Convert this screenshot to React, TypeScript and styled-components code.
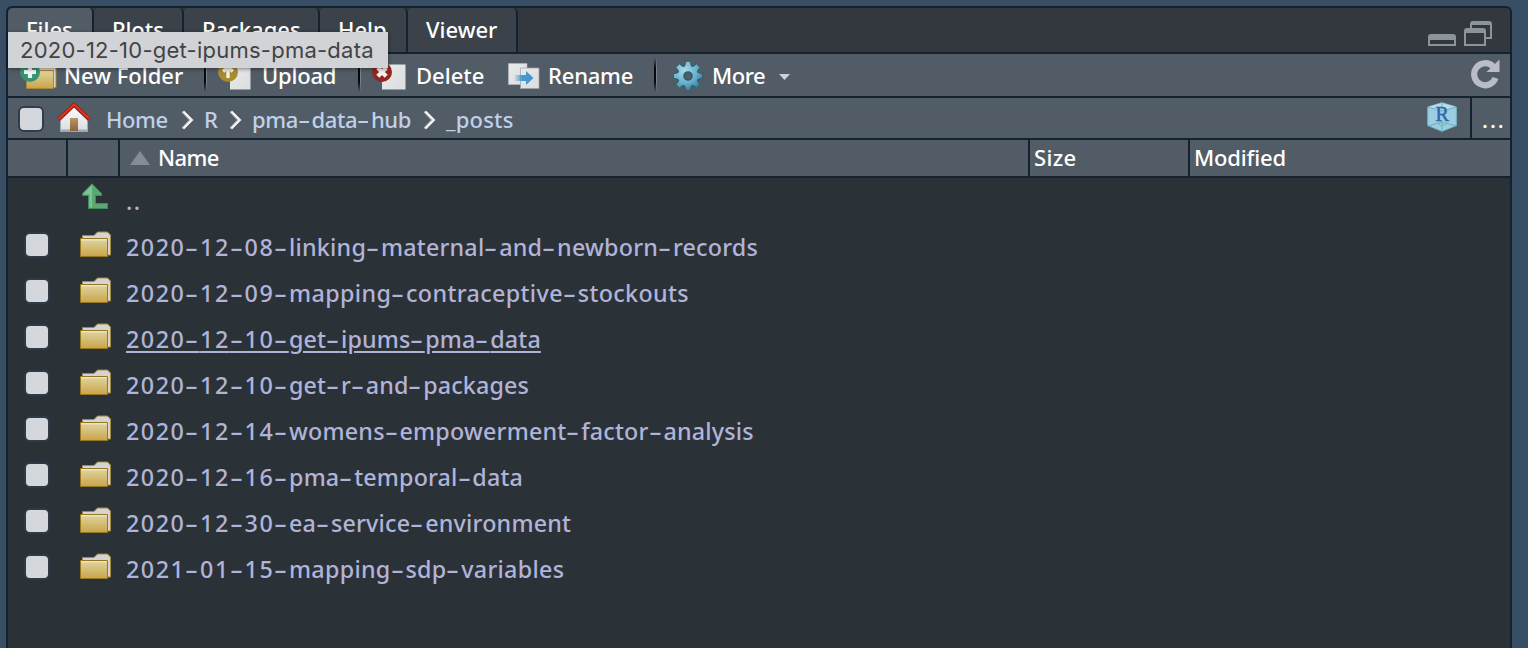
import React from "react";
import styled, { createGlobalStyle } from "styled-components";

const line = "#14212f";
const bar = "#525c66";

const GlobalStyle = createGlobalStyle`
  * { box-sizing: border-box; }
  body { margin: 0; background: #384e65; overflow: hidden; }
  svg { display: block; flex: none; }
`;

const Page = styled.div`
  height: 648px;
  padding: 6px 16px 0 6px;
  position: relative;
  font-family: "Noto Sans", sans-serif;
  font-size: 22px;
  font-weight: 500;
  color: #fff;
`;
const Panel = styled.section`
  height: 642px;
  border: 2px solid ${line};
  border-bottom: 0;
  border-radius: 6px 6px 0 0;
  overflow: hidden;
  background: #2a3238;
  display: flex;
  flex-direction: column;
`;
const TabBar = styled.div`
  display: flex;
  height: 46px;
  flex: none;
  background: #32383e;
  border-bottom: 2px solid ${line};
`;
const Tab = styled.div<{ $w: number; $active?: boolean }>`
  width: ${p => p.$w}px;
  border-right: 2px solid ${line};
  border-radius: 5px 5px 0 0;
  background: ${p => (p.$active ? bar : "#3b4249")};
  padding-left: 18px;
  line-height: 42px;
  white-space: nowrap;
`;
const WindowButtons = styled.div`
  margin-left: auto;
  display: flex;
  align-items: flex-end;
  gap: 8px;
  padding: 0 18px 6px 0;
`;
const ToolBar = styled.div`
  display: flex;
  align-items: center;
  height: 44px;
  flex: none;
  background: ${bar};
  border-bottom: 2px solid ${line};
  padding: 0 9px 0 12px;
`;
const ToolButton = styled.div<{ $w: number; $gap: number; $left?: number }>`
  display: flex;
  align-items: center;
  gap: ${p => p.$gap}px;
  width: ${p => p.$w}px;
  padding-left: ${p => p.$left ?? 0}px;
  height: 42px;
  flex: none;
`;
const Lowered = styled.div<{ $by: number }>`
  padding-top: ${p => p.$by}px;
`;
const Label = styled.span<{ $track?: number }>`
  letter-spacing: ${p => p.$track ?? 0}px;
  line-height: 30px;
  padding-bottom: 1px;
  white-space: nowrap;
`;
const Divider = styled.i`
  width: 3px;
  height: 34px;
  flex: none;
  background: linear-gradient(90deg, #07090b 0 67%, #78828b 67%);
  mask-image: linear-gradient(transparent, #000 30% 70%, transparent);
`;
const Refresh = styled.div`
  margin-left: auto;
  padding-bottom: 3px;
`;
const PathBar = styled.div`
  display: flex;
  height: 42px;
  flex: none;
  align-items: center;
  background: ${bar};
  border-bottom: 2px solid ${line};
  padding-left: 10px;
`;
const Check = styled.span<{ $dark?: boolean }>`
  width: 26px;
  height: 26px;
  flex: none;
  border: 2px solid ${p => (p.$dark ? "#2e3a48" : "#303d4e")};
  border-radius: 6px;
  background: #d4d8dd;
`;
const PathCheck = styled(Check)`
  margin-top: 2px;
`;
const HomeSlot = styled.div`
  margin: -1px 0 0 13px;
  width: 49px;
`;
const Crumb = styled.span<{ $w: number; $track?: number }>`
  width: ${p => p.$w}px;
  color: #bfd0e9;
  letter-spacing: ${p => p.$track ?? 0}px;
  white-space: nowrap;
  padding-top: 1px;
`;
const Project = styled.div`
  margin: -3px 13px 0 auto;
`;
const Dots = styled.div`
  width: 40px;
  height: 40px;
  border-left: 2px solid ${line};
  padding-left: 10px;
  line-height: 43px;
  letter-spacing: 1.9px;
`;
const HeaderRow = styled.div`
  display: grid;
  grid-template-columns: 60px 52px 910px 160px 1fr;
  height: 38px;
  flex: none;
  background: ${bar};
  border-bottom: 2px solid ${line};
`;
const HeadCell = styled.div<{ $pad?: number; $last?: boolean }>`
  border-right: ${p => (p.$last ? 0 : 2)}px solid ${line};
  display: flex;
  align-items: center;
  gap: 8px;
  padding-left: ${p => p.$pad ?? 4}px;
  padding-bottom: 1px;
`;
const FileRow = styled.div`
  display: grid;
  grid-template-columns: 70px 48px 1fr;
  height: 46px;
  flex: none;
`;
const CheckCell = styled.div`
  padding: 8px 0 0 16px;
  display: flex;
`;
const IconCell = styled.div<{ $top: number; $left: number }>`
  padding: ${p => p.$top}px 0 0 ${p => p.$left}px;
`;
const FileName = styled.div<{ $track: number; $underline?: boolean }>`
  font-size: 23.3px;
  font-weight: 500;
  line-height: 46px;
  color: #b2b3d8;
  letter-spacing: ${p => p.$track}px;
  white-space: nowrap;
  text-decoration: ${p => (p.$underline ? "underline" : "none")};
  text-decoration-thickness: 2px;
  text-underline-offset: 3px;
`;
const DateText = styled.span`
  letter-spacing: 1.5px;
`;
const Dash = styled.span<{ $w: number; $underline?: boolean }>`
  display: inline-block;
  width: ${p => p.$w}px;
  letter-spacing: 1px;
  transform: scaleX(1.74);
  transform-origin: left;
  text-decoration: ${p => (p.$underline ? "underline" : "none")};
  text-decoration-thickness: 2px;
  text-underline-offset: 3px;
`;
const Tooltip = styled.div`
  position: absolute;
  left: 8px;
  top: 32px;
  width: 380px;
  height: 36px;
  padding-left: 12px;
  background: #d1d3d6;
  box-shadow: 0 1px 4px rgba(0, 0, 0, 0.45);
  color: #424346;
  font-family: Inter, sans-serif;
  font-size: 22px;
  font-weight: 400;
  letter-spacing: 0.24px;
  line-height: 36px;
  white-space: nowrap;
`;

function Dashed({ text, w, underline }: { text: string; w: number; underline?: boolean }) {
  return (
    <>
      {text.split("-").map((part, i) => (
        <React.Fragment key={i}>
          {i > 0 && <Dash $w={w} $underline={underline}>-</Dash>}
          {/^\d+$/.test(part) ? <DateText>{part}</DateText> : part}
        </React.Fragment>
      ))}
    </>
  );
}

const Gradients = () => (
  <defs>
    <linearGradient id="gold" x1="0" y1="0" x2="0" y2="1">
      <stop offset="0" stopColor="#dfd5a0" /><stop offset="1" stopColor="#c9a54a" />
    </linearGradient>
    <linearGradient id="paper" x1="0" y1="0" x2="1" y2="1">
      <stop offset="0" stopColor="#e9eaeb" /><stop offset="1" stopColor="#dadcde" />
    </linearGradient>
  </defs>
);

const FolderIcon = () => (
  <svg width="32" height="27" viewBox="0 0 32 27">
    <path d="M2.5 8V4.5H14L17.5 1H27.5L30.5 4V24H28" fill="#d3d4d6" stroke="#a98836" />
    <path d="M.5 7.5H27.5V25.5H.5Z" fill="url(#gold)" stroke="#98781f" />
    <path d="M1 8.8H27" stroke="#eee8ca" strokeWidth="1.2" />
  </svg>
);
const NewFolderIcon = () => (
  <svg width="37" height="34" viewBox="0 0 37 34">
    <Gradients />
    <path d="M8 13.5V7H20L23 4H33L36 7V29.5H32" fill="#dad8cf" stroke="#a98836" />
    <path d="M6.5 12.5H33.5V30.5H6.5Z" fill="url(#gold)" stroke="#a98836" />
    <circle cx="10" cy="14" r="10" fill="#399373" />
    <path d="M10 8V20M4 14H16" stroke="#f0f4f2" strokeWidth="4.2" />
  </svg>
);
const UploadIcon = () => (
  <svg width="33" height="34" viewBox="0 0 33 34">
    <path d="M12 6H32.5V31.5H12Z" fill="url(#paper)" />
    <circle cx="10" cy="14" r="10" fill="#a88a31" />
    <path d="M10 20V10M5.2 13.5L10 8.5L14.8 13.5" fill="none" stroke="#f4f1e6" strokeWidth="3.4" />
  </svg>
);
const DeleteIcon = () => (
  <svg width="34" height="34" viewBox="0 0 34 34">
    <path d="M10 6.5H33.5V31.5H10Z" fill="url(#paper)" />
    <circle cx="10" cy="14" r="10" fill="#91271f" />
    <path d="M5.8 9.8L14.2 18.2M14.2 9.8L5.8 18.2" stroke="#f5efef" strokeWidth="4.2" />
  </svg>
);
const RenameIcon = () => (
  <svg width="32" height="26" viewBox="0 0 32 26">
    <defs>
      <linearGradient id="move"><stop stopColor="#4598cf" stopOpacity=".15" /><stop offset=".4" stopColor="#4598cf" /></linearGradient>
    </defs>
    <path d="M.5.5H19V21.5H.5Z" fill="url(#paper)" stroke="#b5babd" strokeWidth=".6" />
    <path d="M12.5 5H31V25.5H12.5Z" fill="url(#paper)" stroke="#9ba2a7" strokeWidth=".7" />
    <path d="M7 12H18V8L25.5 15L18 22V18H7Z" fill="url(#move)" />
  </svg>
);
const gearPath = Array.from({ length: 8 }, (_, i) => {
  const points: [number, number][] = [[10.4, -23], [11, -16], [14.9, -10], [14.9, 10], [11, 16], [10.4, 23]];
  return points
    .map(([r, d], j) => {
      const a = ((i * 45 + d) * Math.PI) / 180;
      return `${i + j === 0 ? "M" : "L"}${(16 + r * Math.sin(a)).toFixed(2)} ${(16 - r * Math.cos(a)).toFixed(2)}`;
    })
    .join("");
}).join("") + "Z";
const GearIcon = () => (
  <svg width="32" height="32" viewBox="0 0 32 32">
    <defs>
      <radialGradient id="steel" cx=".38" cy=".32" r=".7">
        <stop stopColor="#a2dcea" /><stop offset=".6" stopColor="#68b1cb" /><stop offset="1" stopColor="#397f9f" />
      </radialGradient>
    </defs>
    <path d={gearPath} fill="url(#steel)" stroke="#34586b" strokeWidth="1" strokeLinejoin="round" />
    <circle cx="16" cy="16" r="4" fill={bar} stroke="#2f5c72" strokeWidth="1.6" />
  </svg>
);
const HomeIcon = () => (
  <svg width="34" height="31" viewBox="0 0 34 31">
    <defs>
      <linearGradient id="wall" x1="0" y1="0" x2="0" y2="1"><stop stopColor="#fff" /><stop offset="1" stopColor="#d9dbe0" /></linearGradient>
      <linearGradient id="door" x1="0" y1="0" x2="0" y2="1"><stop stopColor="#b89468" /><stop offset="1" stopColor="#8f6439" /></linearGradient>
    </defs>
    <path d="M3.5 29.5V16L17 3L30.5 16V29.5Z" fill="url(#wall)" stroke="#9eabac" />
    <path d="M4 28.5H30" stroke="#9eabac" strokeWidth="2" />
    <path d="M13 16H21V29H13Z" fill="url(#door)" />
    <path d="M1.5 17.5L17 2.8L32.5 17.5" fill="none" stroke="#8d1d15" strokeWidth="4" />
    <path d="M1.5 17L17 2.5L32.5 17" fill="none" stroke="#df3420" strokeWidth="2.2" />
  </svg>
);
const Arrow = styled.svg`
  margin: 3px 10px 0 -1px;
`;
const Chevron = () => (
  <Arrow width="13" height="20" viewBox="0 0 13 20">
    <path d="M1.5 1.5L9.5 10L1.5 18.5" fill="none" stroke="#b5b9bd" strokeWidth="2.4" />
    <path d="M2.5 1.5L11 10L2.5 18.5" fill="none" stroke="#f6f6f6" strokeWidth="2" />
  </Arrow>
);
const RefreshIcon = () => (
  <svg width="30" height="31" viewBox="0 0 30 31">
    <path d="M24.5 20A11 11 0 1 1 22 8.5" fill="none" stroke="#b9bdc7" strokeWidth="6.2" />
    <path d="M28.5 1.5V14H15.5Z" fill="#b9bdc7" />
  </svg>
);
const CubeLetter = styled.text`
  font: 400 20px "Liberation Serif", serif;
`;
const ProjectIcon = () => (
  <svg width="30" height="30" viewBox="0 0 30 30">
    <path d="M.8 5L15 .7L29.3 5V23.5L15 29.3L.8 23.5Z" fill="#9ccde1" stroke="#76bccf" />
    <path d="M1 5L15 9L29 5L15 1Z" fill="#b5dcec" />
    <path d="M15 20L1 24M15 20L29 24M15 20V29M1 5L15 9L29 5M15 1V9" fill="none" stroke="#63afbd" strokeWidth=".9" />
    <CubeLetter x="8.5" y="18.5" fill="#3264aa" stroke="#3264aa" strokeWidth=".5">R</CubeLetter>
    <path d="M11 22L15 24L20 21.5" stroke="#78aebb" fill="none" />
  </svg>
);
const UpIcon = () => (
  <svg width="28" height="27" viewBox="0 0 28 27">
    <path d="M11 .8L20.5 10.500V12.5H14.5V20.5H26.5V25.5H7.5V12.5H1.5V10.500Z" fill="#5ba873" stroke="#3f8f5b" />
    <path d="M11 2L2.5 10.8V11.5H8.5V24.5H11Z" fill="#7cc492" />
  </svg>
);

const files: { name: string; track: number; hovered?: boolean }[] = [
  { name: "2020-12-08-linking-maternal-and-newborn-records", track: 0.22 },
  { name: "2020-12-09-mapping-contraceptive-stockouts", track: 0.37 },
  { name: "2020-12-10-get-ipums-pma-data", track: 0.14, hovered: true },
  { name: "2020-12-10-get-r-and-packages", track: 0.12 },
  { name: "2020-12-14-womens-empowerment-factor-analysis", track: 0.21 },
  { name: "2020-12-16-pma-temporal-data", track: 0.17 },
  { name: "2020-12-30-ea-service-environment", track: 0.21 },
  { name: "2021-01-15-mapping-sdp-variables", track: 0.28 },
];

export default function App() {
  return (
    <Page>
      <GlobalStyle />
      <Panel>
        <TabBar>
          <Tab $w={86} $active>Files</Tab>
          <Tab $w={90}>Plots</Tab>
          <Tab $w={136}>Packages</Tab>
          <Tab $w={88}>Help</Tab>
          <Tab $w={110}>Viewer</Tab>
          <WindowButtons>
            <svg width="28" height="12" viewBox="0 0 28 12">
              <path d="M1 11V3Q1 1 3 1H25Q27 1 27 3V11Z" fill="none" stroke="#8d9499" strokeWidth="2" />
              <path d="M1 1.5H27V6H1Z" fill="#8d9499" />
            </svg>
            <svg width="28" height="25" viewBox="0 0 28 25">
              <path d="M7 7V3Q7 1 9 1H25Q27 1 27 3V17H22" fill="none" stroke="#8d9499" strokeWidth="2" />
              <path d="M7 1H27V4H7Z" fill="#8d9499" />
              <path d="M1 24V10Q1 8 3 8H19Q21 8 21 10V24Z" fill="#32383e" stroke="#8d9499" strokeWidth="2" />
              <path d="M1 8H21V12H1Z" fill="#8d9499" />
            </svg>
          </WindowButtons>
        </TabBar>
        <ToolBar>
          <ToolButton $w={184} $gap={7}><NewFolderIcon /><Label>New Folder</Label></ToolButton>
          <Divider />
          <ToolButton $w={151} $gap={11} $left={11}><UploadIcon /><Label $track={-0.2}>Upload</Label></ToolButton>
          <Divider />
          <ToolButton $w={147} $gap={10} $left={11}><DeleteIcon /><Label>Delete</Label></ToolButton>
          <ToolButton $w={146} $gap={8}>
            <Lowered $by={2}><RenameIcon /></Lowered>
            <Label $track={-0.2}>Rename</Label>
          </ToolButton>
          <Divider />
          <ToolButton $w={136} $gap={8} $left={15}>
            <Lowered $by={1}><GearIcon /></Lowered>
            <Label $track={-0.5}>More</Label>
            <Caret width="11" height="6" viewBox="0 0 11 6"><path d="M0 0H11L5.5 6Z" fill="#cfd2d5" /></Caret>
          </ToolButton>
          <Refresh><RefreshIcon /></Refresh>
        </ToolBar>
        <PathBar>
          <PathCheck />
          <HomeSlot><HomeIcon /></HomeSlot>
          <Crumb $w={76} $track={-0.4}>Home</Crumb>
          <Chevron />
          <Crumb $w={26}>R</Crumb>
          <Chevron />
          <Crumb $w={172} $track={-0.4}><Dashed text="pma-data-hub" w={13.7} /></Crumb>
          <Chevron />
          <Crumb $w={76} $track={0.2}>_posts</Crumb>
          <Project><ProjectIcon /></Project>
          <Dots>...</Dots>
        </PathBar>
        <HeaderRow>
          <HeadCell />
          <HeadCell />
          <HeadCell $pad={10}>
            <svg width="20" height="14" viewBox="0 0 20 14"><path d="M0 14L10 0L20 14Z" fill="#858c97" /></svg>
            <HeadLabel $track={-0.6}>Name</HeadLabel>
          </HeadCell>
          <HeadCell><HeadLabel $track={0.3}>Size</HeadLabel></HeadCell>
          <HeadCell $last><HeadLabel $track={-0.15}>Modified</HeadLabel></HeadCell>
        </HeaderRow>
        <FileRow>
          <div />
          <IconCell $top={5} $left={3}><UpIcon /></IconCell>
          <FileName $track={1.4}>..</FileName>
        </FileRow>
        {files.map(f => (
          <FileRow key={f.name}>
            <CheckCell><Check $dark /></CheckCell>
            <IconCell $top={7} $left={2}><FolderIcon /></IconCell>
            <FileName $track={f.track} $underline={f.hovered}>
              <Dashed text={f.name} w={14.8} underline={f.hovered} />
            </FileName>
          </FileRow>
        ))}
      </Panel>
      <Tooltip>2020-12-10-get-ipums-pma-data</Tooltip>
    </Page>
  );
}

const Caret = styled.svg`
  margin: 4px 0 0 6px;
`;
const HeadLabel = styled(Label)`
  padding-bottom: 2px;
`;
